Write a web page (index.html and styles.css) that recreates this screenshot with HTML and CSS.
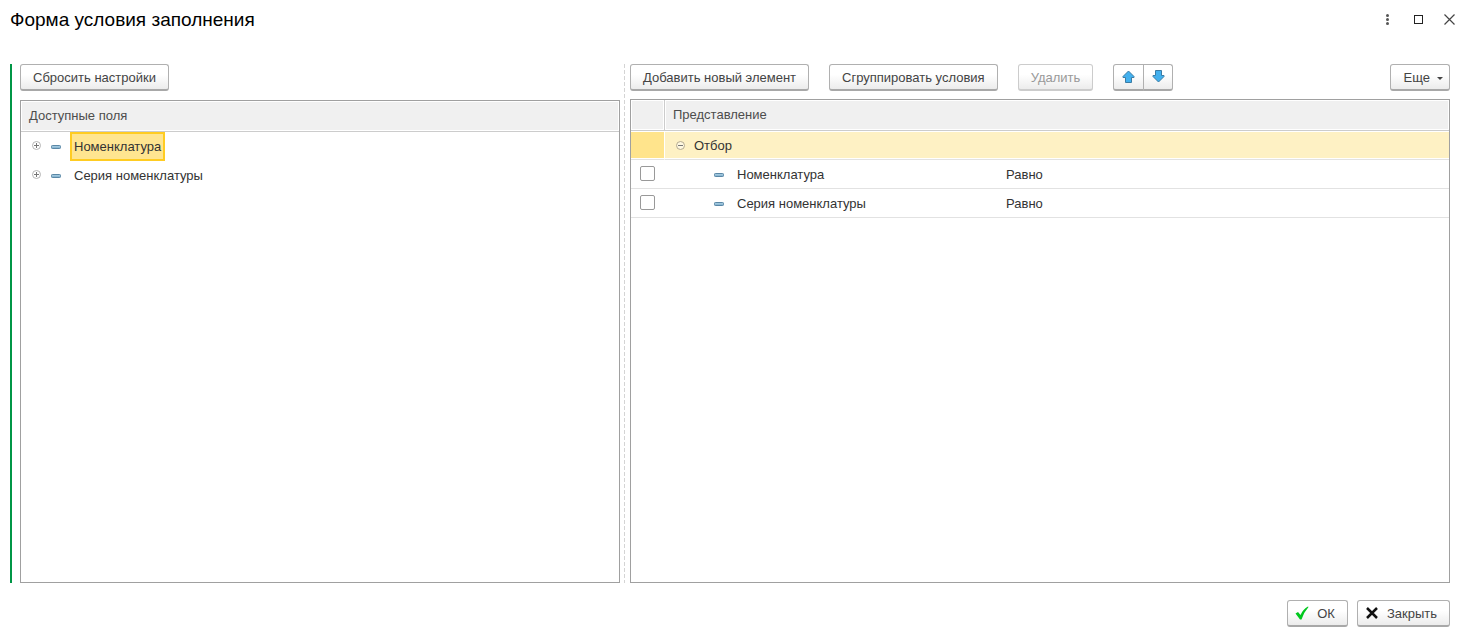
FILE: index.html
```html
<!DOCTYPE html>
<html lang="ru">
<head>
<meta charset="utf-8">
<title>Форма условия заполнения</title>
<link rel="stylesheet" href="styles.css">
</head>
<body>
<svg class="defs" aria-hidden="true">
  <defs>
    <linearGradient id="dash-fill" x1="0" y1="0" x2="0" y2="1">
      <stop offset="0" stop-color="#b4d6e8"/>
      <stop offset="1" stop-color="#78a9c8"/>
    </linearGradient>
    <symbol id="dash" viewBox="0 0 10 4">
      <rect x=".5" y=".5" width="9" height="3" rx=".8" fill="url(#dash-fill)" stroke="#5a87a6"/>
    </symbol>
    <symbol id="plus" viewBox="0 0 9 9">
      <circle cx="4.500" cy="4.500" r="4" fill="#fff" stroke="#b4b4b4"/>
      <path d="M2 4.500h5M4.500 2v5" stroke="#777"/>
    </symbol>
    <symbol id="minus" viewBox="0 0 9 9">
      <circle cx="4.500" cy="4.500" r="4" fill="#fff8e0" stroke="#b4aa90"/>
      <path d="M2 4.500h5" stroke="#777"/>
    </symbol>
  </defs>
</svg>
<div class="window">
  <header class="titlebar">
    <h1 class="title">Форма условия заполнения</h1>
    <div class="window-controls">
      <button class="icon-button" aria-label="Меню"><svg width="13" height="13"><g fill="#555"><circle cx="6.500" cy="2.500" r="1.500"/><circle cx="6.500" cy="6.500" r="1.500"/><circle cx="6.500" cy="10.500" r="1.500"/></g></svg></button>
      <button class="icon-button" aria-label="Развернуть"><svg width="13" height="13"><rect x="2.500" y="2.500" width="8" height="8" fill="none" stroke="#222"/></svg></button>
      <button class="icon-button" aria-label="Закрыть окно"><svg width="13" height="13"><path d="M1.500 1.500l10 10M11.500 1.500l-10 10" stroke="#444" stroke-width="1.200"/></svg></button>
    </div>
  </header>
  <main class="content">
    <section class="pane pane-fields">
      <div class="toolbar"><button class="button">Сбросить настройки</button></div>
      <div class="box">
        <h2 class="box-head">Доступные поля</h2>
        <ul class="tree">
          <li class="tree-item"><button class="toggle" aria-label="Развернуть Номенклатура"><svg width="9" height="9"><use href="#plus"/></svg></button><svg class="dash" width="10" height="4"><use href="#dash"/></svg><span class="tree-label selected">Номенклатура</span></li>
          <li class="tree-item"><button class="toggle" aria-label="Развернуть Серия номенклатуры"><svg width="9" height="9"><use href="#plus"/></svg></button><svg class="dash" width="10" height="4"><use href="#dash"/></svg><span class="tree-label">Серия номенклатуры</span></li>
        </ul>
      </div>
    </section>
    <div class="splitter"></div>
    <section class="pane">
      <div class="toolbar toolbar-wide">
        <button class="button">Добавить новый элемент</button>
        <button class="button">Сгруппировать условия</button>
        <button class="button" disabled>Удалить</button>
        <div class="button-group">
          <button class="button arrow" aria-label="Вверх"><svg width="13" height="13"><path d="M6.500 1L12 6.500V7.500H9.500V12.500H3.500V7.500H1V6.500Z" fill="#42b0ee" stroke="#3a7ca5"/></svg></button>
          <button class="button arrow" aria-label="Вниз"><svg width="13" height="13"><path d="M6.500 12L12 6.500V5.500H9.500V.5H3.500V5.500H1V6.500Z" fill="#42b0ee" stroke="#3a7ca5"/></svg></button>
        </div>
        <button class="button more">Еще<svg width="6" height="3"><path d="M0 0h6L3 3z" fill="#444"/></svg></button>
      </div>
      <div class="box">
        <table class="grid">
          <colgroup><col class="col-check"><col class="col-name"><col></colgroup>
          <thead><tr><th aria-label="Использование"></th><th colspan="2">Представление</th></tr></thead>
          <tbody>
            <tr class="group-row"><td></td><td colspan="2"><div class="cell cell-group"><button class="toggle" aria-label="Свернуть Отбор"><svg width="9" height="9"><use href="#minus"/></svg></button>Отбор</div></td></tr>
            <tr><td class="check-cell"><input class="check" type="checkbox" aria-label="Номенклатура"></td><td><div class="cell cell-field"><svg width="10" height="4"><use href="#dash"/></svg>Номенклатура</div></td><td>Равно</td></tr>
            <tr><td class="check-cell"><input class="check" type="checkbox" aria-label="Серия номенклатуры"></td><td><div class="cell cell-field"><svg width="10" height="4"><use href="#dash"/></svg>Серия номенклатуры</div></td><td>Равно</td></tr>
          </tbody>
        </table>
      </div>
    </section>
  </main>
  <footer class="footer">
    <button class="button action"><svg width="14" height="14"><path d="M.5 7.500L3 6L5.500 9Q8 3 13 .5L13.500 1Q9 6 6.500 13.500H5Z" fill="#00c81e"/></svg>ОК</button>
    <button class="button action"><svg width="14" height="14"><path d="M2 2L12 12M12 2L2 12" stroke="#111" stroke-width="2.500"/></svg>Закрыть</button>
  </footer>
</div>
</body>
</html>
```
FILE: styles.css
```css
* { box-sizing: border-box; }

body {
  margin: 0;
  background: #fff;
  color: #333;
  font: 13px/16px "Liberation Sans", Arial, sans-serif;
}

button {
  font: inherit;
  color: inherit;
}

svg { display: block; flex: none; }

.defs { position: absolute; width: 0; height: 0; }

.window {
  display: flex;
  flex-direction: column;
  min-height: 100vh;
  padding: 0 17px 11px 10px;
}

.titlebar {
  display: flex;
  justify-content: space-between;
  align-items: center;
  height: 39px;
  margin-bottom: 25px;
}

.title {
  margin: 0;
  color: #000;
  font-size: 19px;
  font-weight: 400;
  line-height: 24px;
}

.window-controls {
  display: flex;
  gap: 18px;
  margin-right: -6px;
}

.icon-button, .toggle {
  padding: 0;
  border: 0;
  background: none;
}

.content {
  flex: 1;
  display: grid;
  grid-template-columns: 600fr 10px 820fr;
  padding-left: 8px;
  border-left: 2px solid #009646;
}

.pane {
  display: flex;
  flex-direction: column;
  gap: 8px;
  min-width: 0;
}

.pane-fields { gap: 9px; }

.splitter {
  width: 1px;
  margin-left: 4px;
  background: repeating-linear-gradient(#d4d4d4 0 4px, #fff 4px 6px);
}

.toolbar { display: flex; }

.toolbar-wide { gap: 20px; }

.button {
  display: flex;
  align-items: center;
  justify-content: center;
  height: 27px;
  padding: 2px 12px 0;
  border: 1px solid #b0b0b0;
  border-bottom: 2px solid #a8a8a8;
  border-radius: 3px;
  background: linear-gradient(#fff 40%, #ececec);
  color: #444;
  white-space: nowrap;
}

.button:disabled {
  border-color: #ccc;
  color: #999;
}

.button-group { display: flex; }

.arrow {
  width: 30px;
  padding: 0;
  border-radius: 0 3px 3px 0;
}

.arrow:first-child {
  width: 31px;
  margin-right: -1px;
  border-radius: 3px 0 0 3px;
}

.arrow svg { margin-bottom: 1px; }

.more {
  gap: 7px;
  margin-left: auto;
  padding-right: 6px;
  padding-left: 13px;
}

.box {
  flex: 1;
  border: 1px solid #a0a0a0;
}

.box-head, .grid th {
  height: 31px;
  padding: 0 8px;
  border-bottom: 1px solid #ccc;
  background: #f0f0f0;
  box-shadow: inset 0 0 0 1px #fff;
  color: #4d4d4d;
  font-size: 13px;
  font-weight: 400;
  line-height: 30px;
  text-align: left;
}

.box-head { margin: 0; }

.tree {
  margin: 0;
  padding: 0;
  list-style: none;
}

.tree-item {
  display: flex;
  align-items: center;
  height: 29px;
  padding-left: 11px;
}

.toggle { margin-bottom: 2px; }

.dash { margin: 0 9px 0 10px; }

.tree-label {
  padding: 5px 2px 4px;
  border: 2px solid transparent;
  line-height: 16px;
}

.selected {
  border-color: #fc2;
  background: #ffe590;
}

.grid {
  width: 100%;
  border-collapse: separate;
  border-spacing: 0;
  table-layout: fixed;
}

.col-check { width: 34px; }
.col-name { width: 333px; }

.grid th:first-child { border-right: 1px solid #ccc; }

.grid td {
  height: 29px;
  padding: 2px 8px 0;
  border-bottom: 1px solid #e2e2e2;
}

.grid .check-cell { padding: 0 8px 2px; }

.grid .group-row td {
  background: #fef1c4;
  box-shadow: inset 0 1px #fff, inset 0 -1px #fff;
}

.grid .group-row td:first-child {
  border-right: 1px solid #fff;
  background: #ffe48c;
}

.cell { display: flex; align-items: center; }
.cell-group { gap: 9px; padding-left: 3px; }
.cell-field { gap: 13px; padding-left: 41px; }

.check {
  display: block;
  appearance: none;
  width: 15px;
  height: 15px;
  margin: 0 0 0 1px;
  border: 1px solid #999;
  border-radius: 2px;
  background: #fff;
}

.footer {
  display: flex;
  justify-content: flex-end;
  gap: 9px;
  margin-top: 17px;
}

.action { gap: 8px; padding-left: 7px; }

.action svg { margin-bottom: 2px; }
```
